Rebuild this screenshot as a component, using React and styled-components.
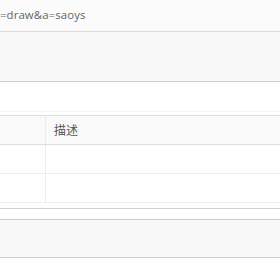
import React from "react";
import styled, { createGlobalStyle } from "styled-components";

const GlobalStyle = createGlobalStyle`
  html, body {
    margin: 0;
    padding: 0;
    background: #fff;
  }
  body {
    font-family: "Open Sans", "Noto Sans CJK SC", sans-serif;
    font-size: 12px;
    color: #555;
  }
`;

const App = () => {
  return (
    <Page>
      <GlobalStyle />
      <UrlBar>=draw&amp;a=saoys</UrlBar>
      <Toolbar />
      <Spacer />
      <Table>
        <thead>
          <tr>
            <Th first></Th>
            <Th>描述</Th>
          </tr>
        </thead>
        <tbody>
          <tr>
            <Td first></Td>
            <Td></Td>
          </tr>
          <tr>
            <Td first></Td>
            <Td></Td>
          </tr>
        </tbody>
      </Table>
      <Divider />
      <Footer />
    </Page>
  );
};

const Page = styled.div`
  width: 280px;
  height: 280px;
  overflow: hidden;
`;

const UrlBar = styled.div`
  height: 31px;
  line-height: 29px;
  background: #fbfbfb;
  border-bottom: 1px solid #dcdcdc;
  white-space: nowrap;
  font-size: 11.4px;
  letter-spacing: 0.1px;
  color: #666;
`;

const Toolbar = styled.div`
  height: 49px;
  background: #f8f8f8;
  border-bottom: 1px solid #d0d0d0;
`;

const Spacer = styled.div`
  height: 29px;
  border-bottom: 1px solid #f3f3f3;
  margin-bottom: 3px;
`;

const Table = styled.table`
  width: 100%;
  border-collapse: collapse;
  border-top: 1px solid #dedede;
  border-bottom: 1px solid #f0f0f0;
`;

const Th = styled.th`
  height: 28px;
  padding: 0 0 0 8px;
  background: #f9f9f9;
  border-bottom: 1px solid #dedede;
  border-left: ${(p) => (p.first ? "none" : "1px solid #ececec")};
  width: ${(p) => (p.first ? "37px" : "auto")};
  text-align: left;
  font-weight: normal;
  font-size: 12px;
  color: #555;
`;

const Td = styled.td`
  height: 28px;
  padding: 0;
  border-bottom: 1px solid #ededed;
  border-left: ${(p) => (p.first ? "none" : "1px solid #ececec")};
`;

const Divider = styled.div`
  margin-top: 5px;
  height: 10px;
  border-top: 1px solid #d0d0d0;
  border-bottom: 1px solid #d0d0d0;
`;

const Footer = styled.div`
  height: 37px;
  background: #f8f8f8;
  border-bottom: 1px solid #d0d0d0;
`;

export default App;
